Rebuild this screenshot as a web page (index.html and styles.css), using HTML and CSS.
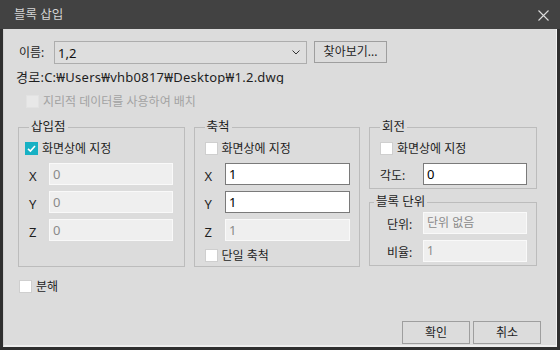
FILE: index.html
```html
<!DOCTYPE html>
<html lang="ko">
<head>
<meta charset="utf-8">
<title>블록 삽입</title>
<link rel="stylesheet" href="styles.css">
</head>
<body>
<div class="window">
  <div class="titlebar">
    <span class="title">블록 삽입</span>
    <svg class="close" width="11" height="11" viewBox="0 0 11 11"><path d="M0.5 0.5 L10.5 10.5 M10.5 0.5 L0.5 10.5" stroke="#dcdcdc" stroke-width="1.1" fill="none"/></svg>
  </div>
  <div class="content">
    <div class="name-row">
      <span class="name-label">이름:</span>
      <div class="combo">
        <span class="combo-value">1,2</span>
        <svg class="chevron" width="8" height="5" viewBox="0 0 8 5"><path d="M0.5 0.5 L4 4 L7.5 0.5" stroke="#333" stroke-width="1" fill="none"/></svg>
      </div>
      <button class="btn browse">찾아보기...</button>
    </div>
    <div class="path">경로:C:₩Users₩vhb0817₩Desktop₩1.2.dwg</div>
    <div class="check disabled geo"><span class="box"></span><span>지리적 데이터를 사용하여 배치</span></div>

    <div class="groups">
      <fieldset class="group g-insert">
        <legend>삽입점</legend>
        <div class="check"><span class="box checked"><svg width="13" height="13" viewBox="0 0 13 13"><path d="M3 6.8 L5.4 9 L10 4" stroke="#fff" stroke-width="1.6" fill="none"/></svg></span><span>화면상에 지정</span></div>
        <div class="field"><span class="flabel">X</span><div class="input off">0</div></div>
        <div class="field"><span class="flabel">Y</span><div class="input off">0</div></div>
        <div class="field"><span class="flabel">Z</span><div class="input off">0</div></div>
      </fieldset>

      <fieldset class="group g-scale">
        <legend>축척</legend>
        <div class="check"><span class="box"></span><span>화면상에 지정</span></div>
        <div class="field"><span class="flabel">X</span><div class="input on">1</div></div>
        <div class="field"><span class="flabel">Y</span><div class="input on">1</div></div>
        <div class="field"><span class="flabel">Z</span><div class="input off">1</div></div>
        <div class="check uniform"><span class="box"></span><span>단일 축척</span></div>
      </fieldset>

      <div class="col">
        <fieldset class="group g-rot">
          <legend>회전</legend>
          <div class="check"><span class="box"></span><span>화면상에 지정</span></div>
          <div class="field"><span class="flabel wide">각도:</span><div class="input on">0</div></div>
        </fieldset>
        <fieldset class="group g-unit">
          <legend>블록 단위</legend>
          <div class="field"><span class="flabel wide ind">단위:</span><div class="input off">단위 없음</div></div>
          <div class="field"><span class="flabel wide ind">비율:</span><div class="input off">1</div></div>
        </fieldset>
      </div>
    </div>

    <div class="check explode"><span class="box"></span><span>분해</span></div>

    <div class="buttons">
      <button class="btn action">확인</button>
      <button class="btn action">취소</button>
    </div>
  </div>
</div>
</body>
</html>
```

FILE: styles.css
```css
* { box-sizing: border-box; }
html, body { margin: 0; padding: 0; }
body {
  width: 560px;
  height: 350px;
  background: #2f2f2f;
  font-family: "Noto Sans", "Noto Sans CJK KR", sans-serif;
  font-size: 12px;
  color: #1e1e1e;
  overflow: hidden;
}
.window {
  width: 560px;
  height: 350px;
  display: flex;
  flex-direction: column;
}
.titlebar {
  height: 29px;
  flex: none;
  background: #424242;
  display: flex;
  align-items: center;
  justify-content: space-between;
  padding: 0 11px 0 14px;
}
.title {
  color: #d6d6d6;
  font-size: 12.5px;
  line-height: 16px;
  margin-top: 1px;
}
.close { display: block; margin-top: 1px; }

.content {
  margin: 0 3px 3px 3px;
  height: 318px;
  background: #dcdcdc;
  border-left: 1px solid #d0d0d0;
  border-right: 1px solid #f2f2f2;
  border-bottom: 2px solid #eeeeee;
  padding: 12px 19px 0 14px;
  display: flex;
  flex-direction: column;
}

.name-row {
  display: flex;
  align-items: flex-start;
  padding-left: 1px;
  height: 23px;
}
.name-label {
  width: 35px;
  line-height: 23px;
}
.combo {
  width: 253px;
  height: 23px;
  border: 1px solid #adadad;
  background: #dedede;
  display: flex;
  align-items: center;
  justify-content: space-between;
  padding: 0 6px 0 3px;
}
.combo-value { font-size: 13px; color: #111; }
.chevron { display: block; }

.btn {
  font-family: inherit;
  font-size: 12px;
  color: #1e1e1e;
  background: #dcdcdc;
  border: 1px solid #9e9e9e;
  border-radius: 0;
  padding: 0;
  margin: 0;
}
.browse {
  margin-left: 7px;
  width: 73px;
  height: 22px;
  line-height: 18px;
}

.path {
  margin: 5px 0 0 -2px;
  height: 15px;
  line-height: 17px;
  overflow: hidden;
  font-size: 13px;
  letter-spacing: 0.25px;
  white-space: nowrap;
}

.check {
  display: flex;
  align-items: center;
  height: 13px;
  line-height: 13px;
  gap: 4px;
}
.box {
  width: 13px;
  height: 13px;
  flex: none;
  background: #fff;
  border: 1px solid #cfcfcf;
  display: flex;
  align-items: center;
  justify-content: center;
}
.box.checked {
  background: #17b1c4;
  border-color: #17b1c4;
}
.box svg { display: block; flex: none; }
.check.disabled { color: #a3a3a3; }
.check.disabled .box { background: #e8e8e8; border-color: #e2e2e2; }
.geo { margin: 11px 0 0 8px; }

.groups {
  margin-top: 11px;
  display: flex;
  gap: 9px;
  align-items: stretch;
}
.group {
  margin: 0;
  border: 1px solid #bcbcbc;
  padding: 7px 9px 4px 10px;
  min-width: 0;
  display: flex;
  flex-direction: column;
  gap: 6px;
}
.group legend {
  padding: 0 2px;
  margin-left: 0;
  line-height: 16px;
  height: 16px;
  font-size: 12.5px;
}
.g-insert { width: 167px; }
.g-insert > .check { margin-left: -4px; margin-bottom: 2px; }
.g-scale { width: 167px; }
.g-scale > .check:first-of-type { margin-bottom: 2px; }
.col {
  width: 168px;
  display: flex;
  flex-direction: column;
  gap: 5px;
}
.g-rot { padding-bottom: 3px; }
.g-rot > .check { margin-bottom: 2px; }
.g-unit { padding-top: 2px; padding-bottom: 3px; }
.g-unit legend { margin-left: -6px; }

.field {
  display: flex;
  align-items: center;
  height: 22px;
}
.flabel {
  width: 20px;
  font-size: 13px;
  padding-top: 4px;
}
.g-scale .flabel { width: 22px; }
.flabel.wide { width: 43px; font-size: 12px; padding-top: 2px; }
.flabel.ind { padding-left: 7px; }
.input {
  height: 22px;
  flex: none;
  line-height: 20px;
  padding: 0 3px;
  font-size: 13px;
  white-space: nowrap;
}
.g-insert .input { width: 124px; }
.g-scale .input { width: 125px; }
.col .input { width: 104px; }
.input.on {
  background: #fff;
  border: 1px solid #7a7a7a;
  color: #000;
}
.input.off {
  background: #efefef;
  border: 1px solid #f9f9f9;
  color: #8a8a8a;
}
.g-unit .input.off { font-size: 12px; }
.uniform { margin-top: 2px; }

.explode { margin: 13px 0 0 1px; }

.buttons {
  margin-top: auto;
  margin-bottom: 1px;
  margin-right: -4px;
  display: flex;
  justify-content: flex-end;
  gap: 3px;
}
.action {
  width: 68px;
  height: 23px;
  line-height: 19px;
}
```
